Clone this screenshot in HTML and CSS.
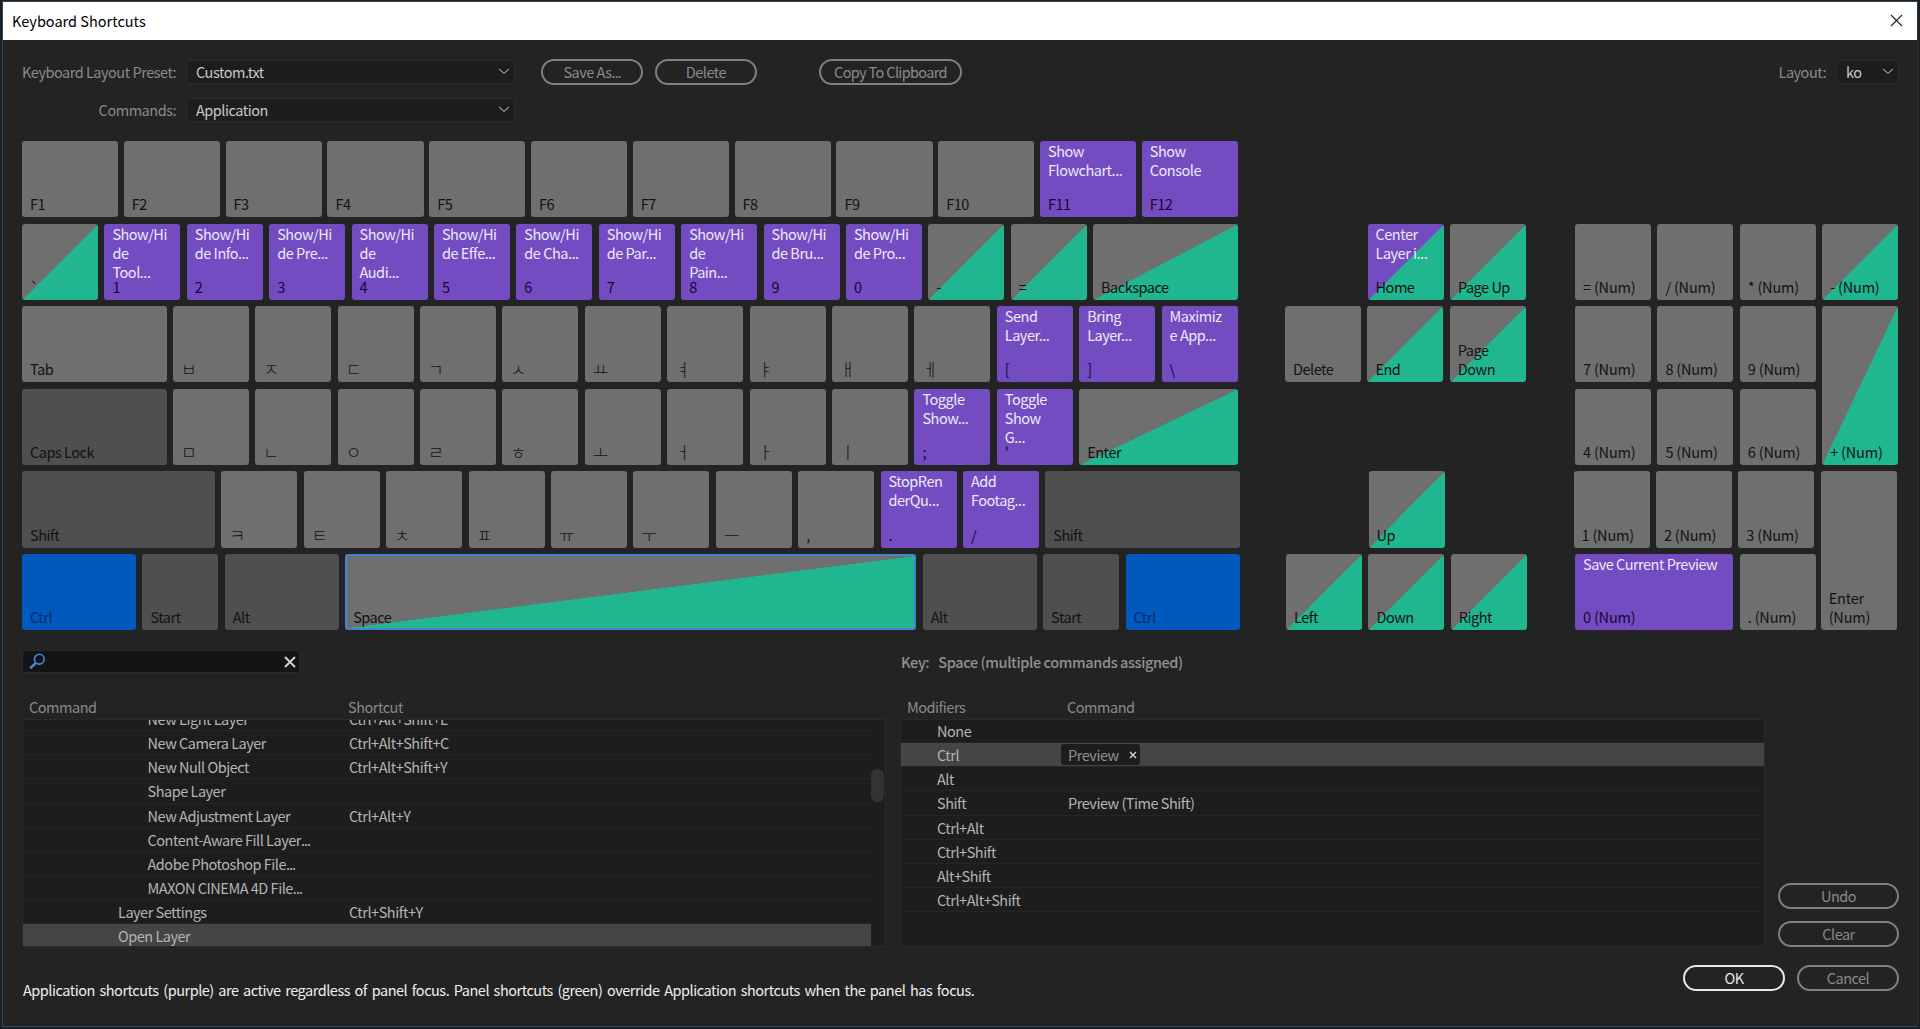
FILE: index.html
```html
<!DOCTYPE html>
<html lang="en">
<head>
    <meta charset="UTF-8">
    <meta name="viewport" content="width=device-width, initial-scale=1.0">
    <title>Keyboard Shortcuts</title>
    <link rel="stylesheet" href="styles.css">
</head>
<body>
    <div class="dialog">
        <div class="titlebar">
            <span>Keyboard Shortcuts</span>
            <svg class="close" width="13" height="13" viewBox="0 0 13 13"><path d="M1 1L12 12M12 1L1 12" stroke="#222" stroke-width="1.1" fill="none"/></svg>
        </div>

        <div class="content">
            <div class="controls">
                <div class="presets">
                    <label class="preset-label">Keyboard Layout Preset:</label>
                    <div class="select">Custom.txt <svg width="12" height="7" viewBox="0 0 12 7"><path d="M1 1L6 5.5L11 1"/></svg></div>
                    <label>Commands:</label>
                    <div class="select">Application <svg width="12" height="7" viewBox="0 0 12 7"><path d="M1 1L6 5.5L11 1"/></svg></div>
                </div>
                <button class="btn save">Save As<i>...</i></button>
                <button class="btn delete">Delete</button>
                <button class="btn copy">Copy To Clipboard</button>
                <div class="layout">
                    <label>Layout:</label>
                    <div class="select small">ko <svg width="12" height="7" viewBox="0 0 12 7"><path d="M1 1L6 5.5L11 1"/></svg></div>
                </div>
            </div>

            <div class="keyboard">
                <div class="block main">
                    <div class="row frow">
                        <div class="key"><span class="name">F1</span></div>
                        <div class="key"><span class="name">F2</span></div>
                        <div class="key"><span class="name">F3</span></div>
                        <div class="key"><span class="name">F4</span></div>
                        <div class="key"><span class="name">F5</span></div>
                        <div class="key"><span class="name">F6</span></div>
                        <div class="key"><span class="name">F7</span></div>
                        <div class="key"><span class="name">F8</span></div>
                        <div class="key"><span class="name">F9</span></div>
                        <div class="key"><span class="name">F10</span></div>
                        <div class="key app"><span class="cmd">Show<br>Flowchart...</span><span class="name">F11</span></div>
                        <div class="key app"><span class="cmd">Show<br>Console</span><span class="name">F12</span></div>
                    </div>
                    <div class="row">
                        <div class="key panel"><span class="name">`</span></div>
                        <div class="key app"><span class="cmd">Show/Hi<br>de<br>Tool...</span><span class="name">1</span></div>
                        <div class="key app"><span class="cmd">Show/Hi<br>de Info...</span><span class="name">2</span></div>
                        <div class="key app"><span class="cmd">Show/Hi<br>de Pre...</span><span class="name">3</span></div>
                        <div class="key app"><span class="cmd">Show/Hi<br>de<br>Audi...</span><span class="name">4</span></div>
                        <div class="key app"><span class="cmd">Show/Hi<br>de Effe...</span><span class="name">5</span></div>
                        <div class="key app"><span class="cmd">Show/Hi<br>de Cha...</span><span class="name">6</span></div>
                        <div class="key app"><span class="cmd">Show/Hi<br>de Par...</span><span class="name">7</span></div>
                        <div class="key app"><span class="cmd">Show/Hi<br>de<br>Pain...</span><span class="name">8</span></div>
                        <div class="key app"><span class="cmd">Show/Hi<br>de Bru...</span><span class="name">9</span></div>
                        <div class="key app"><span class="cmd">Show/Hi<br>de Pro...</span><span class="name">0</span></div>
                        <div class="key panel"><span class="name">-</span></div>
                        <div class="key panel"><span class="name">=</span></div>
                        <div class="key panel fill"><span class="name">Backspace</span></div>
                    </div>
                    <div class="row">
                        <div class="key tab"><span class="name">Tab</span></div>
                        <div class="key"><span class="name ko">ㅂ</span></div>
                        <div class="key"><span class="name ko">ㅈ</span></div>
                        <div class="key"><span class="name ko">ㄷ</span></div>
                        <div class="key"><span class="name ko">ㄱ</span></div>
                        <div class="key"><span class="name ko">ㅅ</span></div>
                        <div class="key"><span class="name ko">ㅛ</span></div>
                        <div class="key"><span class="name ko">ㅕ</span></div>
                        <div class="key"><span class="name ko">ㅑ</span></div>
                        <div class="key"><span class="name ko">ㅐ</span></div>
                        <div class="key"><span class="name ko">ㅔ</span></div>
                        <div class="key app"><span class="cmd">Send<br>Layer...</span><span class="name">[</span></div>
                        <div class="key app"><span class="cmd">Bring<br>Layer...</span><span class="name">]</span></div>
                        <div class="key app fill"><span class="cmd">Maximiz<br>e App...</span><span class="name">\</span></div>
                    </div>
                    <div class="row">
                        <div class="key tab mod"><span class="name">Caps Lock</span></div>
                        <div class="key"><span class="name ko">ㅁ</span></div>
                        <div class="key"><span class="name ko">ㄴ</span></div>
                        <div class="key"><span class="name ko">ㅇ</span></div>
                        <div class="key"><span class="name ko">ㄹ</span></div>
                        <div class="key"><span class="name ko">ㅎ</span></div>
                        <div class="key"><span class="name ko">ㅗ</span></div>
                        <div class="key"><span class="name ko">ㅓ</span></div>
                        <div class="key"><span class="name ko">ㅏ</span></div>
                        <div class="key"><span class="name ko">ㅣ</span></div>
                        <div class="key app"><span class="cmd">Toggle<br>Show...</span><span class="name">;</span></div>
                        <div class="key app"><span class="cmd">Toggle<br>Show<br>G...</span><span class="name">'</span></div>
                        <div class="key panel fill"><span class="name">Enter</span></div>
                    </div>
                    <div class="row wide">
                        <div class="key shift mod"><span class="name">Shift</span></div>
                        <div class="key"><span class="name ko">ㅋ</span></div>
                        <div class="key"><span class="name ko">ㅌ</span></div>
                        <div class="key"><span class="name ko">ㅊ</span></div>
                        <div class="key"><span class="name ko">ㅍ</span></div>
                        <div class="key"><span class="name ko">ㅠ</span></div>
                        <div class="key"><span class="name ko">ㅜ</span></div>
                        <div class="key"><span class="name ko">ㅡ</span></div>
                        <div class="key"><span class="name">,</span></div>
                        <div class="key app"><span class="cmd">StopRen<br>derQu...</span><span class="name">.</span></div>
                        <div class="key app"><span class="cmd">Add<br>Footag...</span><span class="name">/</span></div>
                        <div class="key mod fill"><span class="name">Shift</span></div>
                    </div>
                    <div class="row wide">
                        <div class="key ctrl active"><span class="name">Ctrl</span></div>
                        <div class="key mod"><span class="name">Start</span></div>
                        <div class="key alt mod"><span class="name">Alt</span></div>
                        <div class="key panel fill selected"><span class="name">Space</span></div>
                        <div class="key alt mod"><span class="name">Alt</span></div>
                        <div class="key mod"><span class="name">Start</span></div>
                        <div class="key ctrl active"><span class="name">Ctrl</span></div>
                    </div>
                </div>

                <div class="block nav">
                    <div class="row nav-home">
                        <div class="key app-panel"><span class="cmd">Center<br>Layer i...</span><span class="name">Home</span></div>
                        <div class="key panel"><span class="name">Page Up</span></div>
                    </div>
                    <div class="row nav-end">
                        <div class="key"><span class="name">Delete</span></div>
                        <div class="key panel"><span class="name">End</span></div>
                        <div class="key panel"><span class="name">Page<br>Down</span></div>
                    </div>
                    <div class="row nav-up">
                        <div class="key panel"><span class="name">Up</span></div>
                    </div>
                    <div class="row nav-arrows">
                        <div class="key panel"><span class="name">Left</span></div>
                        <div class="key panel"><span class="name">Down</span></div>
                        <div class="key panel"><span class="name">Right</span></div>
                    </div>
                </div>

                <div class="numpad">
                    <div class="key"><span class="name">= (Num)</span></div>
                    <div class="key"><span class="name">/ (Num)</span></div>
                    <div class="key"><span class="name">* (Num)</span></div>
                    <div class="key panel"><span class="name">- (Num)</span></div>
                    <div class="key"><span class="name">7 (Num)</span></div>
                    <div class="key"><span class="name">8 (Num)</span></div>
                    <div class="key"><span class="name">9 (Num)</span></div>
                    <div class="key panel tall"><span class="name">+ (Num)</span></div>
                    <div class="key"><span class="name">4 (Num)</span></div>
                    <div class="key"><span class="name">5 (Num)</span></div>
                    <div class="key"><span class="name">6 (Num)</span></div>
                    <div class="key nudge"><span class="name">1 (Num)</span></div>
                    <div class="key nudge"><span class="name">2 (Num)</span></div>
                    <div class="key nudge"><span class="name">3 (Num)</span></div>
                    <div class="key tall nudge"><span class="name">Enter<br>(Num)</span></div>
                    <div class="key app double"><span class="cmd">Save Current Preview</span><span class="name">0 (Num)</span></div>
                    <div class="key"><span class="name">. (Num)</span></div>
                </div>
            </div>

            <div class="search-row">
                <div class="search">
                    <svg width="17" height="17" viewBox="0 0 17 17"><circle cx="10.3" cy="6.2" r="4.9" stroke="#3f8ee0" stroke-width="1.6" fill="none"/><path d="M6.8 9.8L1.2 15.4" stroke="#3f8ee0" stroke-width="2.4" fill="none"/></svg>
                    <svg width="12" height="12" viewBox="0 0 12 12"><path d="M1 1L11 11M11 1L1 11" stroke="#d0d0d0" stroke-width="2" fill="none"/></svg>
                </div>
                <div class="key-info"><span class="key-word">Key:</span><span>Space (multiple commands assigned)</span></div>
            </div>

            <div class="tables">
                <div class="table commands">
                    <div class="thead"><span>Command</span><span>Shortcut</span></div>
                    <div class="tbody">
                        <div class="rows">
                            <div class="tr"><span class="deep">New Light Layer</span><span>Ctrl+Alt+Shift+L</span></div>
                            <div class="tr"><span class="deep">New Camera Layer</span><span>Ctrl+Alt+Shift+C</span></div>
                            <div class="tr"><span class="deep">New Null Object</span><span>Ctrl+Alt+Shift+Y</span></div>
                            <div class="tr"><span class="deep">Shape Layer</span><span></span></div>
                            <div class="tr"><span class="deep">New Adjustment Layer</span><span>Ctrl+Alt+Y</span></div>
                            <div class="tr"><span class="deep">Content-Aware Fill Layer<i>...</i></span><span></span></div>
                            <div class="tr"><span class="deep">Adobe Photoshop File<i>...</i></span><span></span></div>
                            <div class="tr"><span class="deep">MAXON CINEMA 4D File<i>...</i></span><span></span></div>
                            <div class="tr"><span>Layer Settings</span><span>Ctrl+Shift+Y</span></div>
                            <div class="tr current"><span>Open Layer</span><span></span></div>
                        </div>
                        <div class="scrollbar"><div class="thumb"></div></div>
                    </div>
                </div>

                <div class="table modifiers">
                    <div class="thead"><span>Modifiers</span><span>Command</span></div>
                    <div class="tbody">
                        <div class="rows">
                            <div class="tr"><span>None</span><span></span></div>
                            <div class="tr current"><span>Ctrl</span><span class="chip">Preview <svg width="8" height="8" viewBox="0 0 8 8"><path d="M1 1L7 7M7 1L1 7" stroke="#ccc" stroke-width="1.5" fill="none"/></svg></span></div>
                            <div class="tr"><span>Alt</span><span></span></div>
                            <div class="tr"><span>Shift</span><span>Preview (Time Shift)</span></div>
                            <div class="tr"><span>Ctrl+Alt</span><span></span></div>
                            <div class="tr"><span>Ctrl+Shift</span><span></span></div>
                            <div class="tr"><span>Alt+Shift</span><span></span></div>
                            <div class="tr"><span>Ctrl+Alt+Shift</span><span></span></div>
                        </div>
                    </div>
                </div>

                <div class="side">
                    <button class="btn">Undo</button>
                    <button class="btn">Clear</button>
                </div>
            </div>

            <div class="footer">
                <p>Application shortcuts (purple) are active regardless of panel focus. Panel shortcuts (green) override Application shortcuts when the panel has focus.</p>
                <button class="btn ok">OK</button>
                <button class="btn">Cancel</button>
            </div>
        </div>
    </div>
</body>
</html>
```
FILE: styles.css
```css
* {
    box-sizing: border-box;
}
body {
    margin: 0;
    height: 1029px;
    padding: 1px 2px 1px 2px;
    overflow: hidden;
    background: #182129;
    font-family: "Noto Sans CJK KR", "Noto Sans", sans-serif;
    font-size: 14.5px;
    line-height: 19px;
    letter-spacing: -0.48px;
    color: #b4b4b4;
}
.dialog {
    height: 1026px;
    background: #232323;
    border: 1px solid #35474d;
    border-right-color: #333;
}
.titlebar {
    display: flex;
    align-items: center;
    justify-content: space-between;
    height: 38px;
    padding: 0 14px 1px 9px;
    background: #fff;
    color: #000;
    letter-spacing: 0;
}
.content {
    width: 1877px;
    margin-left: 19px;
}

/* top controls */
.controls {
    display: flex;
    align-items: flex-start;
    height: 101px;
    padding-top: 19px;
}
.presets {
    display: grid;
    grid-template-columns: 154px 329px;
    column-gap: 10px;
    row-gap: 14px;
    padding-top: 1px;
    color: #8a8a8a;
    text-align: right;
    line-height: 23px;
    white-space: nowrap;
}
.preset-label {
    padding-right: 3px;
}
.select {
    display: flex;
    align-items: center;
    justify-content: space-between;
    height: 24px;
    padding: 0 4px 1px 9px;
    background: #1d1d1d;
    border: 1px solid #2a2a2a;
    border-radius: 3px;
    color: #c8c8c8;
}
.select svg {
    margin-bottom: 1px;
    fill: none;
    stroke: #8a8a8a;
    stroke-width: 1.3;
}
.select.small {
    width: 63px;
}
.btn {
    width: 102px;
    height: 26px;
    padding: 0;
    border: 2px solid #808080;
    border-radius: 13px;
    background: none;
    color: #8a8a8a;
    font: inherit;
    line-height: 20px;
    letter-spacing: -0.5px;
}
.save {
    margin-left: 26px;
}
.delete {
    margin-left: 12px;
}
.copy {
    width: 143px;
    margin-left: 62px;
    letter-spacing: -0.65px;
}
.layout {
    display: flex;
    gap: 10px;
    margin-left: auto;
    padding-top: 1px;
    color: #8a8a8a;
    line-height: 23px;
}
i {
    font-style: normal;
    letter-spacing: -1px;
}

/* keyboard */
.keyboard {
    display: flex;
    height: 489px;
}
.block {
    display: flex;
    flex-direction: column;
    gap: 6.3px;
}
.main {
    width: 1217.5px;
    margin-right: 45.5px;
}
.row {
    display: flex;
    gap: 6.4px;
    width: 1216px;
}
.row.wide {
    width: 1217.5px;
}
.frow {
    gap: 5.5px;
}
.frow .key {
    flex: 1;
}
.key {
    display: grid;
    flex: none;
    width: 76px;
    height: 76.3px;
    padding: 0 0 4px 8px;
    border-radius: 3px;
    background: #6f6f6f;
    color: #121212;
    white-space: nowrap;
}
.cmd, .name {
    grid-area: 1 / 1;
}
.cmd {
    align-self: start;
    height: 0;
    color: #eee8f8;
}
.name {
    align-self: end;
}
.name.ko {
    font-size: 17px;
    font-weight: 300;
}
.key.app {
    background: #734cc1;
    color: #170538;
}
.key.panel {
    background: linear-gradient(to bottom right, #6f6f6f 50%, #20b68f 50.3%);
}
.key.app-panel {
    background: linear-gradient(to bottom right, #734cc1 50%, #20b68f 50.3%);
}
.key.mod {
    background: #4f4f4f;
}
.key.active {
    background: #0059bd;
    color: #062c66;
}
.key.selected {
    padding: 0 0 2px 6px;
    border: 2px solid #3f85d8;
}
.key.fill {
    flex: 1;
}
.key.tab {
    width: 144.5px;
}
.key.shift {
    width: 193px;
}
.key.ctrl, .key.alt {
    width: 114px;
}
.nav {
    width: 241px;
    margin-right: 49px;
    padding-top: 82.6px;
}
.nav .row {
    width: auto;
}
.nav-home {
    padding-left: 82.5px;
}
.nav-up {
    margin-top: 82.6px;
    padding-left: 83.5px;
}
.nav-arrows {
    padding-left: 1px;
}
.numpad {
    display: grid;
    grid-template-columns: repeat(4, 76px);
    grid-auto-rows: 76.3px;
    gap: 6.3px 6.4px;
    padding-top: 82.6px;
    letter-spacing: -0.2px;
}
.numpad .cmd {
    letter-spacing: -0.5px;
}
.key.tall {
    grid-row: span 2;
    height: auto;
}
.key.double {
    grid-column: span 2;
    width: auto;
}
.key.nudge {
    margin-left: -1.5px;
}

/* search */
.search-row {
    display: flex;
    align-items: center;
    margin-top: 20px;
}
.search {
    display: flex;
    align-items: center;
    justify-content: space-between;
    width: 278px;
    height: 23px;
    padding: 0 3px 0 6px;
    background: #141414;
    border: 1px solid #2a2a2a;
    border-radius: 3px;
}
.key-info {
    display: flex;
    gap: 9px;
    margin-left: 601px;
    color: #909090;
    font-weight: 500;
    letter-spacing: -0.4px;
}

/* tables */
.tables {
    display: flex;
    height: 274px;
}
.table {
    display: flex;
    flex-direction: column;
    width: 864px;
}
.commands {
    margin-right: 14px;
}
.thead {
    display: flex;
    height: 46px;
    padding: 24px 0 0 7px;
    color: #8a8a8a;
}
.thead span:first-child {
    width: 319px;
}
.table.modifiers {
    width: 865px;
}
.modifiers .thead span:first-child {
    width: 160px;
}
.tbody {
    display: flex;
    height: 228px;
    background: #1d1d1d;
    border: 1px solid #2a2a2a;
    overflow: hidden;
}
.rows {
    flex: 1;
}
.tr {
    display: flex;
    height: 24.15px;
    padding-left: 95px;
    border-bottom: 1px solid #252525;
    line-height: 23px;
}
.tr span:first-child {
    width: 231px;
}
.tr .deep {
    margin-left: 29.5px;
    margin-right: -29.5px;
}
.tr.current {
    background: #454545;
}
.commands .rows {
    margin-top: -13px;
}
.modifiers .rows {
    margin-top: -1px;
}
.modifiers .tr {
    padding-left: 36px;
}
.modifiers .tr span:first-child {
    width: 131px;
}
.tr .chip {
    display: flex;
    align-items: center;
    justify-content: space-between;
    width: 79px;
    height: 21px;
    margin: 1px 0 0 -7px;
    padding: 0 3px 0 7px;
    border-radius: 3px;
    background: #1d1d1d;
    color: #909090;
}
.scrollbar {
    width: 14px;
    padding: 49px 1px 0 0;
}
.thumb {
    height: 33px;
    border-radius: 6px;
    background: #333;
}
.side {
    display: flex;
    flex-direction: column;
    justify-content: flex-end;
    gap: 12px;
    margin-left: auto;
}
.side .btn {
    width: 121px;
}

/* footer */
.footer {
    display: flex;
    gap: 12px;
    padding-top: 18px;
}
.footer p {
    margin: 15px auto 0 1px;
    color: #eee;
    white-space: nowrap;
    word-spacing: 1.8px;
}
.btn.ok {
    border-color: #e8e8e8;
    color: #e8e8e8;
}
```
